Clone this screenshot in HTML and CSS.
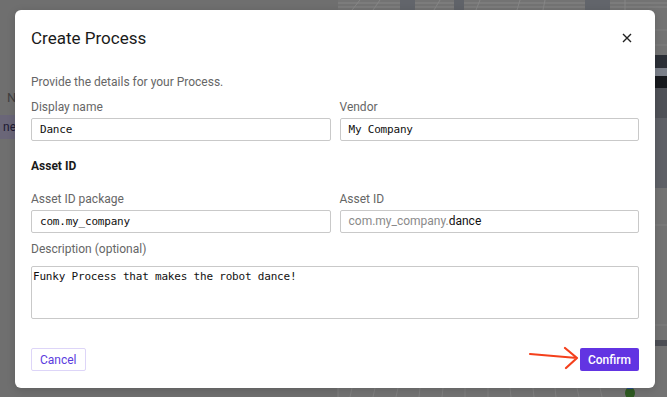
FILE: index.html
```html
<!DOCTYPE html>
<html lang="en">
<head>
    <meta charset="UTF-8">
    <meta name="viewport" content="width=device-width, initial-scale=1.0">
    <title>Create Process</title>
    <link rel="stylesheet" href="styles.css">
</head>
<body>
    <div class="scene">
        <svg class="scene-art" width="667" height="397" viewBox="0 0 667 397">
            <rect x="338" y="0" width="329" height="397" fill="#737373"/>
            <g stroke="#868686" stroke-width="1">
                <line x1="338" y1="3" x2="667" y2="3"/>
                <line x1="338" y1="7" x2="667" y2="7"/>
                <line x1="360" y1="0" x2="352" y2="10"/>
                <line x1="380" y1="0" x2="373" y2="10"/>
                <line x1="440" y1="0" x2="434" y2="10"/>
                <line x1="480" y1="0" x2="476" y2="10"/>
                <line x1="520" y1="0" x2="517" y2="10"/>
                <line x1="545" y1="0" x2="543" y2="10"/>
                <line x1="625" y1="0" x2="625" y2="10"/>
            </g>
            <rect x="400" y="0" width="15" height="10" fill="#62656b"/>
            <rect x="454" y="0" width="10" height="10" fill="#606369"/>
            <rect x="585" y="0" width="25" height="10" fill="#62656b"/>
            <g stroke="#808080" stroke-width="1">
                <line x1="338" y1="388" x2="338" y2="397"/>
                <line x1="352" y1="388" x2="350" y2="397"/>
                <line x1="375" y1="388" x2="373" y2="397"/>
                <line x1="398" y1="388" x2="396" y2="397"/>
                <line x1="420" y1="388" x2="419" y2="397"/>
                <line x1="443" y1="388" x2="442" y2="397"/>
                <line x1="465" y1="388" x2="465" y2="397"/>
                <line x1="488" y1="388" x2="488" y2="397"/>
                <line x1="510" y1="388" x2="511" y2="397"/>
                <line x1="533" y1="388" x2="534" y2="397"/>
                <line x1="555" y1="388" x2="556" y2="397"/>
                <line x1="577" y1="388" x2="579" y2="397"/>
                <line x1="600" y1="388" x2="602" y2="397"/>
                <line x1="655" y1="30" x2="667" y2="30"/>
                <line x1="655" y1="45" x2="667" y2="45"/>
                <line x1="655" y1="225" x2="667" y2="225"/>
                <line x1="655" y1="325" x2="667" y2="325"/>
            </g>
            <rect x="655" y="55" width="12" height="13" fill="#2b2f36"/>
            <rect x="655" y="68" width="12" height="8" fill="#7b808a"/>
            <rect x="655" y="76" width="12" height="12" fill="#17191d"/>
            <rect x="655" y="88" width="12" height="30" fill="#4f5157"/>
            <rect x="655" y="118" width="12" height="70" fill="#5e6066"/>
            <rect x="655" y="340" width="12" height="6" fill="#4c4e54"/>
            <ellipse cx="630" cy="393" rx="5" ry="6" fill="#2e5a22"/>
            <rect x="627" y="386" width="6" height="3" fill="#2b4a8a"/>
        </svg>
        <div class="side-text">N</div>
        <div class="side-tab">ne</div>
    </div>

    <div class="modal">
        <div class="modal-header">
            <h1 class="modal-title">Create Process</h1>
            <svg class="close-icon" width="10" height="10" viewBox="0 0 10 10">
                <path d="M1 1 L9 9 M9 1 L1 9" stroke="#222" stroke-width="1.4" fill="none"/>
            </svg>
        </div>

        <p class="intro">Provide the details for your Process.</p>

        <div class="row">
            <div class="field">
                <label class="field-label">Display name</label>
                <div class="input mono">Dance</div>
            </div>
            <div class="field">
                <label class="field-label">Vendor</label>
                <div class="input mono">My Company</div>
            </div>
        </div>

        <h2 class="section-title">Asset ID</h2>

        <div class="row">
            <div class="field">
                <label class="field-label">Asset ID package</label>
                <div class="input mono">com.my_company</div>
            </div>
            <div class="field">
                <label class="field-label">Asset ID</label>
                <div class="input sans"><span class="prefix">com.my_company.</span>dance</div>
            </div>
        </div>

        <label class="field-label desc-label">Description (optional)</label>
        <div class="textarea mono">Funky Process that makes the robot dance!</div>

        <div class="modal-footer">
            <button class="btn btn-cancel">Cancel</button>
            <button class="btn btn-confirm">Confirm</button>
        </div>

        <svg class="arrow" width="52" height="24" viewBox="0 0 52 24">
            <path d="M1 8 L48 12 M36 2 L48 12 L37 22" stroke="#f4401c" stroke-width="2.2" fill="none" stroke-linecap="round" stroke-linejoin="round"/>
        </svg>
    </div>
</body>
</html>
```

FILE: styles.css
```css
body {
    margin: 0;
    width: 667px;
    height: 397px;
    overflow: hidden;
    position: relative;
    background: #6f6f6f;
    font-family: Roboto, "Liberation Sans", sans-serif;
    color: #222;
}
.scene {
    position: absolute;
    inset: 0;
}
.scene-art {
    display: block;
}
.side-text {
    position: absolute;
    left: 7px;
    top: 90px;
    font-size: 13px;
    color: #3f3f3f;
}
.side-tab {
    position: absolute;
    left: 0;
    top: 115px;
    width: 20px;
    height: 24px;
    line-height: 24px;
    background: #6a6678;
    color: #1d1a33;
    font-size: 12px;
    padding-left: 3px;
    box-sizing: border-box;
}
.modal {
    position: absolute;
    left: 15px;
    top: 10px;
    width: 640px;
    height: 378px;
    background: #fff;
    border-radius: 6px;
    padding: 0 16px;
    box-sizing: border-box;
    box-shadow: 0 2px 8px rgba(0, 0, 0, 0.15);
}
.modal-header {
    display: flex;
    align-items: center;
    justify-content: space-between;
    padding-top: 18px;
    height: 20px;
}
.modal-title {
    margin: 0;
    font-size: 17px;
    font-weight: 400;
    color: #1a1a1a;
    line-height: 20px;
}
.close-icon {
    margin-right: 7px;
}
.intro {
    margin: 26px 0 0;
    font-size: 12px;
    line-height: 16px;
    color: #666;
}
.row {
    display: grid;
    grid-template-columns: 1fr 1fr;
    gap: 9px;
}
.intro + .row {
    margin-top: 9px;
}
.field-label {
    display: block;
    font-size: 12px;
    line-height: 16px;
    color: #666;
    margin-bottom: 3px;
}
.input {
    height: 23px;
    box-sizing: border-box;
    border: 1px solid #c9c9c9;
    border-radius: 2px;
    padding: 0 8px;
    line-height: 21px;
    font-size: 11px;
    letter-spacing: -0.2px;
    color: #111;
    white-space: nowrap;
}
.mono {
    font-family: "DejaVu Sans Mono", "Liberation Mono", monospace;
}
.input.sans {
    font-family: Roboto, "Liberation Sans", sans-serif;
    font-size: 12px;
    letter-spacing: 0;
}
.prefix {
    color: #8a8a8a;
}
.section-title {
    margin: 17px 0 17px;
    font-size: 12px;
    line-height: 16px;
    font-weight: 700;
    color: #1a1a1a;
}
.desc-label {
    margin-top: 8px;
    margin-bottom: 9px;
}
.textarea {
    height: 53px;
    box-sizing: border-box;
    border: 1px solid #c9c9c9;
    border-radius: 2px;
    padding: 3px 1px;
    font-size: 11px;
    letter-spacing: -0.2px;
    line-height: 14px;
    color: #111;
}
.modal-footer {
    display: flex;
    justify-content: space-between;
    margin-top: 29px;
}
.btn {
    height: 23px;
    padding: 0 8px;
    border-radius: 2px;
    font-family: Roboto, "Liberation Sans", sans-serif;
    font-size: 12px;
    cursor: pointer;
}
.btn-cancel {
    background: #fff;
    color: #5b3cde;
    border: 1px solid #ddd5f8;
}
.btn-confirm {
    background: #6234e2;
    color: #fff;
    border: none;
    font-weight: 500;
}
.arrow {
    position: absolute;
    left: 514px;
    top: 336px;
}
```
